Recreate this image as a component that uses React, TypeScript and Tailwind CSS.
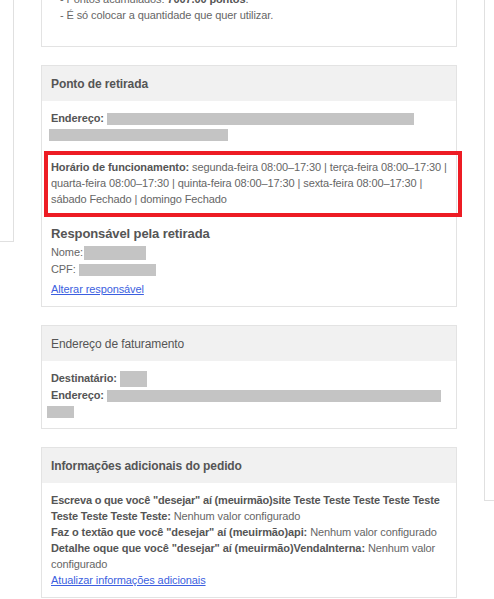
const Redacted = ({ w, h = 12, className = "" }: { w: number; h?: number; className?: string }) => (
  <span
    className={`inline-block bg-[#c4c4c4] align-middle ${className}`}
    style={{ width: w, height: h }}
  />
);

function Card({ title, titleBold = true, children }: { title?: string; titleBold?: boolean; children: React.ReactNode }) {
  return (
    <div className="mb-[18px] border border-[#e3e3e3] bg-white">
      {title && (
        <div className="flex h-[35px] items-center bg-[#f1f1f1] px-[9px] pt-[1px]">
          <h3 className={`text-[12px] text-[#555] ${titleBold ? "font-bold" : "font-normal"}`}>{title}</h3>
        </div>
      )}
      <div className="px-[9px] pt-[9px] pb-[9px]">{children}</div>
    </div>
  );
}

export default function App() {
  return (
    <div className="flex min-h-[599px] overflow-hidden bg-white text-[11px] leading-[16px] tracking-[-0.1px] text-[#666] [font-family:'Liberation_Sans',Arial,sans-serif]">
      <div className="h-[242px] w-[14px] shrink-0 border-r border-b border-[#e0e0e0]" />

      <div className="-mt-[20px] ml-[27px] w-[416px] shrink-0">
        {/* pontos */}
        <div className="mb-[18px] border border-[#e3e3e3] px-[9px] pt-[10px] pb-[23px]">
          <p className="pl-[9px]">
            - Pontos acumulados: <b className="text-[#555]">7007.00 pontos</b>.
          </p>
          <p className="pl-[9px]">- É só colocar a quantidade que quer utilizar.</p>
        </div>

        <Card title="Ponto de retirada">
          <div className="font-bold text-[#555]">
            Endereço: <Redacted w={307} />
          </div>
          <div className="-ml-[2px]">
            <Redacted w={179} />
          </div>

          <div className="mt-[9px] -ml-[7px] -mr-[15px] border-4 border-[#ed1c24] pt-[4px] pb-[6px] pl-[3px] pr-[6px]">
            <b className="text-[#555]">Horário de funcionamento:</b> segunda-feira 08:00–17:30 | terça-feira 08:00–17:30 |
            quarta-feira 08:00–17:30 | quinta-feira 08:00–17:30 | sexta-feira 08:00–17:30 | sábado Fechado | domingo
            Fechado
          </div>

          <h4 className="mt-[8px] text-[13px] leading-[18px] font-bold text-[#555]">Responsável pela retirada</h4>
          <div className="mt-[1px]">
            Nome:<Redacted w={62} h={14} className="ml-[1px]" />
          </div>
          <div className="mt-[1px]">
            CPF: <Redacted w={77} h={12} />
          </div>
          <a href="#" className="mt-[4px] block text-[#3c5fe0] underline">
            Alterar responsável
          </a>
        </Card>

        <Card title="Endereço de faturamento" titleBold={false}>
          <div className="font-bold text-[#555]">
            Destinatário: <Redacted w={27} h={16} />
          </div>
          <div className="font-bold text-[#555]">
            Endereço: <Redacted w={334} />
          </div>
          <div className="-ml-[4px]">
            <Redacted w={27} />
          </div>
        </Card>

        <Card title="Informações adicionais do pedido">
          <div>
            <b className="tracking-[-0.2px] text-[#555]">
              Escreva o que você "desejar" aí (meuirmão)site Teste Teste Teste Teste Teste Teste Teste Teste Teste:
            </b>{" "}
            Nenhum valor configurado
          </div>
          <div>
            <b className="text-[#555]">Faz o textão que você "desejar" aí (meuirmão)api:</b> Nenhum valor configurado
          </div>
          <div>
            <b className="text-[#555]">Detalhe oque que você "desejar" aí (meuirmão)VendaInterna:</b> Nenhum valor
            configurado
          </div>
          <a href="#" className="block text-[#3c5fe0] underline">
            Atualizar informações adicionais
          </a>
        </Card>
      </div>

      <div className="ml-[27px] h-[501px] w-[10px] shrink-0 border-l border-b border-[#e0e0e0]" />
    </div>
  );
}
